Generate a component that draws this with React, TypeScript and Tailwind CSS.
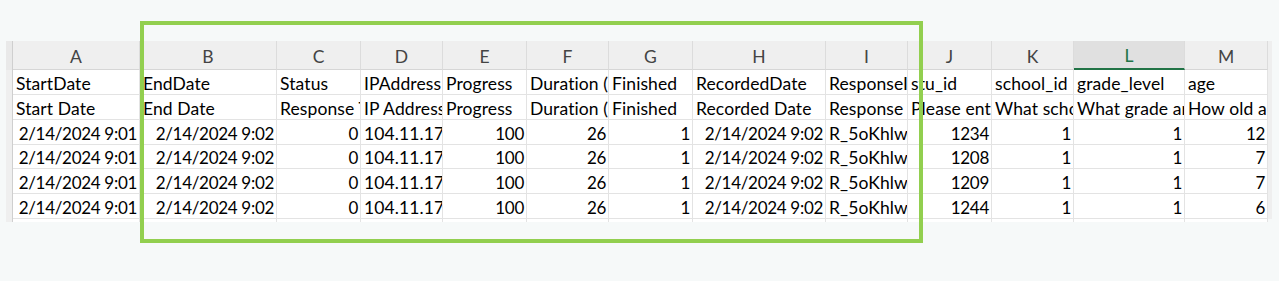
import React from "react";

type Cell = { t: string; r?: boolean };

const widths = [7, 127, 137, 84, 82, 84, 82, 84, 133, 82, 84, 82, 111, 83, 4];
const letters = ["A", "B", "C", "D", "E", "F", "G", "H", "I", "J", "K", "L", "M"];

const row1: Cell[] = [
  { t: "StartDate" },
  { t: "EndDate" },
  { t: "Status" },
  { t: "IPAddress" },
  { t: "Progress" },
  { t: "Duration (in seconds)" },
  { t: "Finished" },
  { t: "RecordedDate" },
  { t: "ResponseId" },
  { t: "stu_id" },
  { t: "school_id" },
  { t: "grade_level" },
  { t: "age" },
];
const row2: Cell[] = [
  { t: "Start Date" },
  { t: "End Date" },
  { t: "Response Type" },
  { t: "IP Address" },
  { t: "Progress" },
  { t: "Duration (in seconds)" },
  { t: "Finished" },
  { t: "Recorded Date" },
  { t: "Response ID" },
  { t: "Please enter your ID" },
  { t: "What school do you attend?" },
  { t: "What grade are you in?" },
  { t: "How old are you?" },
];
const dataRow = (id: string, age: string): Cell[] => [
  { t: "2/14/2024 9:01", r: true },
  { t: "2/14/2024 9:02", r: true },
  { t: "0", r: true },
  { t: "104.11.172.45" },
  { t: "100", r: true },
  { t: "26", r: true },
  { t: "1", r: true },
  { t: "2/14/2024 9:02", r: true },
  { t: "R_5oKhlwQZ3mX" },
  { t: id, r: true },
  { t: "1", r: true },
  { t: "1", r: true },
  { t: age, r: true },
];

const rows: { cells: Cell[]; h: string }[] = [
  { cells: row1, h: "h-[25px]" },
  { cells: row2, h: "h-[25px]" },
  { cells: dataRow("1234", "12"), h: "h-[25px]" },
  { cells: dataRow("1208", "7"), h: "h-[24px]" },
  { cells: dataRow("1209", "7"), h: "h-[25px]" },
  { cells: dataRow("1244", "6"), h: "h-[25px]" },
];

export default function App() {
  const font = { fontFamily: "Lato, 'Open Sans', sans-serif" };
  return (
    <div className="w-[1279px] h-[281px] bg-[#f6f9f9] relative overflow-hidden" style={font}>
      <div className="pt-[41px] pl-[6px] flex">
        <div className="flex flex-col">
          <div className="flex h-[29px] bg-[#efefef]">
            <div className="w-[7px] border-r border-[#cfcfcf] bg-[#e9e9e9]" />
            {letters.map((l, i) => (
              <div
                key={l}
                style={{ width: widths[i + 1] }}
                className={
                  "flex items-end justify-center pb-[1px] text-[17.5px] leading-[22px] border-r border-[#dcdcdc] " +
                  (l === "L"
                    ? "bg-[#e0e0e0] text-[#217346] border-b-2 border-b-[#217346]"
                    : "text-[#444] border-b border-b-[#d6d6d6]")
                }
              >
                {l}
              </div>
            ))}
            <div className="w-[4px] bg-[#efefef]" />
          </div>
          {rows.map((row, ri) => (
            <div key={ri} className={"flex " + row.h}>
              <div className="w-[7px] bg-[#efefef] border-r border-[#cfcfcf]" />
              {row.cells.map((c, ci) => (
                <div
                  key={ci}
                  style={{ width: widths[ci + 1] }}
                  className={
                    "bg-white border-r border-b border-[#e3e3e3] overflow-hidden whitespace-nowrap leading-[24px] pt-[3px] text-black flex items-center " +
                    (c.r
                      ? "justify-end pr-[2px] text-[17px] tracking-[-0.3px]"
                      : "justify-start pl-[3px] text-[17.5px] tracking-[0.1px]")
                  }
                >
                  <span className="shrink-0">{c.t}</span>
                </div>
              ))}
              <div className="w-[4px] bg-[#efefef]" />
            </div>
          ))}
          <div className="flex h-[3px]">
            <div className="w-[7px] bg-[#efefef] border-r border-[#cfcfcf]" />
            {letters.map((l, i) => (
              <div key={l} style={{ width: widths[i + 1] }} className="bg-white border-r border-[#e3e3e3]" />
            ))}
            <div className="w-[4px]" />
          </div>
        </div>
      </div>
      <div className="absolute left-[140px] top-[21px] w-[783px] h-[222px] border-4 border-[#92cf4f] pointer-events-none" />
    </div>
  );
}
